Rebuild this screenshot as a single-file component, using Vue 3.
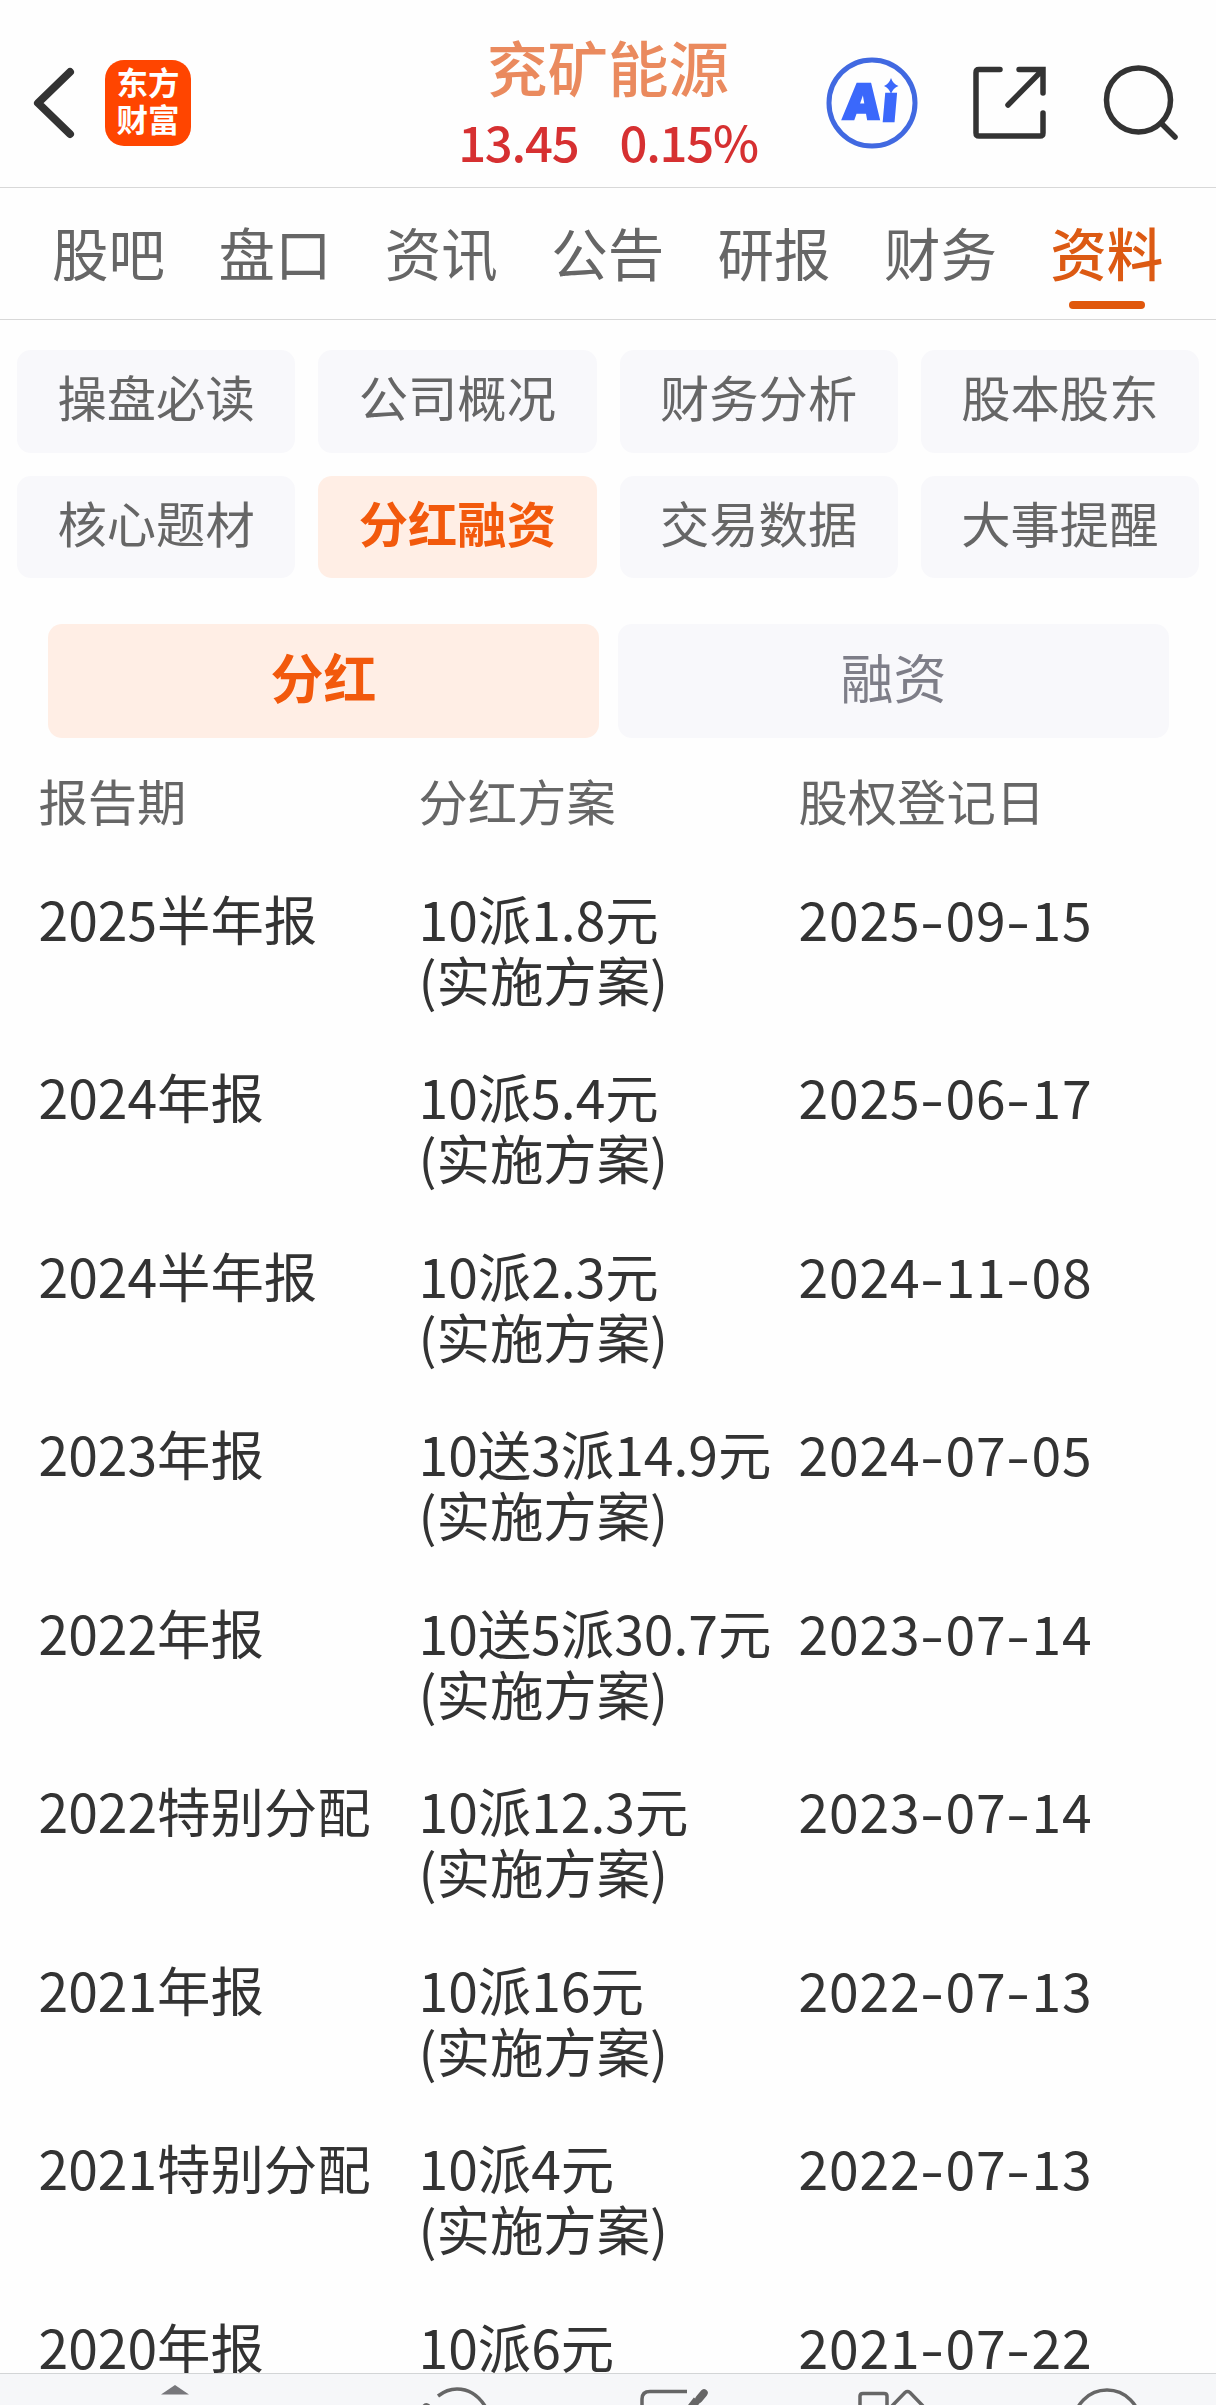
<template>
  <div class="page">
    <header class="topbar">
      <div class="left">
        <svg class="back" width="42" height="72" viewBox="0 0 42 72">
          <path d="M37 5 L5 36 L37 67" />
        </svg>
        <div class="logo">
          <span>东方</span>
          <span>财富</span>
        </div>
      </div>
      <div class="stock">
        <h1>兖矿能源</h1>
        <p><span>13.45</span><span>0.15%</span></p>
      </div>
      <div class="actions">
        <svg width="92" height="92" viewBox="0 0 92 92">
          <circle cx="46" cy="46" r="43" fill="none" stroke="#4169e1" stroke-width="5" />
          <g class="ai" transform="translate(17 62) skewX(-5)">
            <text x="0" y="0">A</text>
            <text x="38" y="2">ı</text>
          </g>
          <path d="M65 21 Q67 27 72.500 29 Q67 31 65 37 Q63 31 58 29 Q63 27 65 21Z" fill="#3b68fb" />
        </svg>
        <svg class="line" width="74" height="74" viewBox="0 0 74 74">
          <path d="M27 3.500 H6 Q3 3.500 3 6.500 V67 Q3 70 6 70 H67 Q70 70 70 67 V47" />
          <path d="M46 3.500 H70 V27 M69 4.500 L35 39" />
        </svg>
        <svg class="line" width="76" height="76" viewBox="0 0 76 76">
          <circle cx="35.500" cy="35" r="32" />
          <path d="M58 58 L72 72" />
        </svg>
      </div>
    </header>

    <nav class="tabs">
      <a v-for="tab in tabs" :key="tab" :class="{ active: tab === activeTab }" @click="activeTab = tab">{{ tab }}</a>
    </nav>

    <main>
      <div class="chips">
        <button v-for="item in menus" :key="item" :class="{ active: item === activeMenu }" @click="activeMenu = item">
          {{ item }}
        </button>
      </div>

      <div class="segment">
        <button v-for="item in kinds" :key="item" :class="{ active: item === activeKind }" @click="activeKind = item">
          {{ item }}
        </button>
      </div>

      <div class="row head">
        <span>报告期</span>
        <span>分红方案</span>
        <span>股权登记日</span>
      </div>
      <div class="list">
        <div v-for="item in dividends" :key="item.period" class="row">
          <span>{{ item.period }}</span>
          <span>{{ item.plan }}<br />(实施方案)</span>
          <span class="date">
            <template v-for="(part, i) in item.date.split('-')" :key="i"><i v-if="i">-</i>{{ part }}</template>
          </span>
        </div>
      </div>
    </main>

    <footer>
      <svg width="1216" height="31" viewBox="0 0 1216 31">
        <path d="M175 11 L189 20.500 H161 Z" fill="#77777b" />
        <g class="foot-line">
          <path d="M438 22 Q447 15 457 15 Q474 15 485 32" />
          <path d="M424 32 Q426 29.500 429 32" />
          <path d="M642 32 V25 Q642 17.500 650 17.500 H687" />
          <path d="M860 32 V22 Q860 19.500 863 19.500 H884 Q887 19.500 887 22 V32" />
          <path d="M892 32 L905 18.500 Q907.500 16.500 910 18.500 L923 32" />
          <circle cx="1107" cy="49" r="33" />
        </g>
        <path d="M704 19 L699 25" stroke="#666" stroke-width="7.500" stroke-linecap="round" />
        <path d="M697 26 L690 35" stroke="#666" stroke-width="8" />
      </svg>
    </footer>
  </div>
</template>

<script setup>
import { ref } from 'vue';

const tabs = ['股吧', '盘口', '资讯', '公告', '研报', '财务', '资料'];
const activeTab = ref('资料');

const menus = ['操盘必读', '公司概况', '财务分析', '股本股东', '核心题材', '分红融资', '交易数据', '大事提醒'];
const activeMenu = ref('分红融资');

const kinds = ['分红', '融资'];
const activeKind = ref('分红');

const dividends = ref([
  { period: '2025半年报', plan: '10派1.8元', date: '2025-09-15' },
  { period: '2024年报', plan: '10派5.4元', date: '2025-06-17' },
  { period: '2024半年报', plan: '10派2.3元', date: '2024-11-08' },
  { period: '2023年报', plan: '10送3派14.9元', date: '2024-07-05' },
  { period: '2022年报', plan: '10送5派30.7元', date: '2023-07-14' },
  { period: '2022特别分配', plan: '10派12.3元', date: '2023-07-14' },
  { period: '2021年报', plan: '10派16元', date: '2022-07-13' },
  { period: '2021特别分配', plan: '10派4元', date: '2022-07-13' },
  { period: '2020年报', plan: '10派6元', date: '2021-07-22' }
]);
</script>

<style>
body {
  margin: 0;
  background: #fefefe;
}
</style>

<style scoped>
.page {
  display: flex;
  flex-direction: column;
  width: 1216px;
  height: 2405px;
  overflow: hidden;
  background: #fefefe;
  color: #333;
  font-family: "Noto Sans CJK SC", sans-serif;
}

.topbar {
  display: grid;
  grid-template-columns: 400px 416px 400px;
  flex: none;
  height: 187px;
  border-bottom: 1px solid #d8d8d8;
}

.left {
  display: flex;
  align-items: center;
  gap: 30px;
  padding: 18px 0 0 33px;
}

.back {
  fill: none;
  stroke: #333;
  stroke-width: 8;
  stroke-linecap: round;
  stroke-linejoin: round;
}

.logo {
  display: flex;
  flex-direction: column;
  justify-content: center;
  box-sizing: border-box;
  width: 86px;
  height: 86px;
  padding-bottom: 6px;
  border-radius: 19px;
  background: #ff4500;
  color: #fff;
  font-size: 31.500px;
  font-weight: 700;
  line-height: 37px;
  text-align: center;
}

.logo span {
  height: 37px;
}

.stock {
  text-align: center;
}

h1 {
  margin: 26px 0 0;
  color: #ea8a5e;
  font-size: 60.500px;
  font-weight: 500;
  line-height: 80px;
}

.stock p {
  display: flex;
  justify-content: center;
  gap: 41px;
  margin: 5px 0 0;
  color: #d63031;
  font-size: 49px;
  font-weight: 500;
  line-height: 60px;
  letter-spacing: -1.200px;
}

.actions {
  display: flex;
  align-items: center;
  gap: 55.500px;
  padding: 18px 0 0 9.500px;
}

.ai {
  fill: #3b68fb;
  stroke: #3b68fb;
  stroke-width: 2.500px;
  font-family: "Noto Sans", sans-serif;
  font-size: 49px;
  font-weight: 900;
}

.line {
  fill: none;
  stroke: #333;
  stroke-width: 5.500;
  stroke-linecap: round;
}

.tabs {
  display: flex;
  flex: none;
  gap: 53.400px;
  height: 131px;
  padding-left: 52px;
  border-bottom: 1px solid #d8d8d8;
}

.tabs a {
  display: flex;
  flex-direction: column;
  align-items: center;
  width: 113px;
  padding-top: 23px;
  color: #666;
  font-size: 56.500px;
  line-height: 80px;
}

.tabs a.active {
  color: #dc5a13;
  font-weight: 500;
}

.tabs a.active::after {
  content: "";
  width: 76px;
  height: 8px;
  margin-top: 10px;
  border-radius: 4px;
  background: #e0570c;
}

main {
  flex: 1;
  min-height: 0;
  overflow: hidden;
}

button {
  padding: 0 0 11px;
  border: none;
  border-radius: 14px;
  background: #f8f8fb;
  color: #666;
  font-family: inherit;
  font-size: 49.300px;
  line-height: 60px;
}

button.active {
  background: #ffeee5;
  color: #f2590c;
  font-weight: 700;
}

.chips {
  display: grid;
  grid-template-columns: repeat(4, 1fr);
  grid-template-rows: 103px 102px;
  gap: 23px;
  padding: 30px 17px 0;
}

.segment {
  display: grid;
  grid-template-columns: 1fr 1fr;
  gap: 19px;
  height: 114px;
  padding: 46px 47px 0 48px;
}

.segment button {
  padding-bottom: 11px;
  font-size: 53px;
}

.segment button:not(.active) {
  color: #7e7e88;
}

.row {
  display: grid;
  grid-template-columns: 380px 380px 1fr;
  height: 178.500px;
  padding-left: 38.500px;
  font-size: 53.400px;
  line-height: 61px;
  white-space: nowrap;
}

.row.head {
  height: 60px;
  margin-top: 32px;
  color: #666;
  font-size: 49.300px;
  line-height: 60px;
}

.list {
  padding-top: 56.500px;
}

.date {
  letter-spacing: 0.850px;
}

.date i {
  display: inline-block;
  width: 25px;
  font-style: normal;
  text-align: center;
  transform: scaleX(1.300);
}

footer {
  flex: none;
  height: 31px;
  border-top: 1px solid #d3d5d6;
  background: #f6f7f9;
}

footer svg {
  display: block;
}

.foot-line {
  fill: none;
  stroke: #666;
  stroke-width: 3.500;
}
</style>
